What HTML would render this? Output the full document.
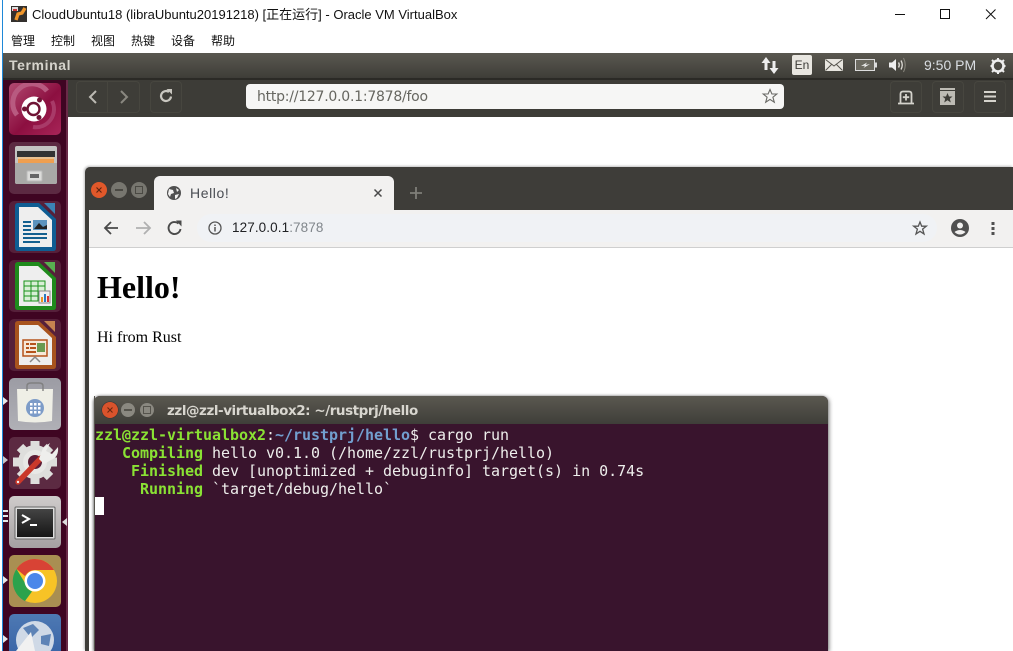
<!DOCTYPE html>
<html><head><meta charset="utf-8">
<style>
html,body{margin:0;padding:0;width:1013px;height:651px;overflow:hidden;background:#fff}
body{position:relative;font-family:"Liberation Sans","Noto Sans CJK SC",sans-serif}
.a{position:absolute}
.t{position:absolute;white-space:nowrap}
svg{position:absolute;overflow:visible}
.btn{position:absolute;box-sizing:border-box;height:32px;width:32px;top:81px;border:1px solid #47463f;border-radius:4px;background:#3e3d38}
.tile{position:absolute;left:9px;width:52px;height:52px;border-radius:5px;box-sizing:border-box;overflow:hidden}
.pip{position:absolute;width:0;height:0;border-top:4px solid transparent;border-bottom:4px solid transparent;border-left:5px solid #e8e8e8;left:3px}
.mono{font-family:"DejaVu Sans Mono",monospace;font-size:15px;line-height:18px;font-weight:400;color:#eeeeec;letter-spacing:-.03px;white-space:pre}
.g{color:#8ae234;font-weight:700}
.b{color:#729fcf;font-weight:700}
.wb{position:absolute;border-radius:50%;width:16px;height:16px}
.m{position:absolute;top:33px;font-size:12px;line-height:17px;color:#111;white-space:nowrap}
</style></head><body>

<!-- left desktop strip -->
<div class="a" style="left:0;top:0;width:2px;height:651px;background:#fff"></div>
<div class="a" style="left:2px;top:0;width:1px;height:651px;background:#1e88d8"></div>

<!-- VirtualBox title -->
<svg style="left:11px;top:6px" width="16" height="16" viewBox="0 0 16 16">
<rect width="16" height="16" fill="#33302d"/><path d="M5 14 L7 8 L11 7 L14 2" stroke="#f0962a" stroke-width="3.4" fill="none"/><rect x="1" y="1" width="6" height="4" fill="#ddd"/><rect x="2" y="3" width="4" height="2" fill="#c33"/></svg>
<div class="t" style="left:32px;top:6px;font-size:13px;line-height:17px;color:#111;font-family:'Liberation Sans','Noto Sans CJK SC',sans-serif;">CloudUbuntu18 (libraUbuntu20191218) [正在运行] - Oracle VM VirtualBox</div>
<div class="m" style="left:11px">管理</div>
<div class="m" style="left:51px">控制</div>
<div class="m" style="left:91px">视图</div>
<div class="m" style="left:131px">热键</div>
<div class="m" style="left:171px">设备</div>
<div class="m" style="left:211px">帮助</div>
<svg style="left:890px;top:8px" width="110" height="14" viewBox="0 0 110 14" fill="none" stroke="#111" stroke-width="1">
<path d="M5 6.500H15"/><rect x="50.500" y="1.500" width="9" height="9"/><path d="M96 1.500L105.500 11M105.500 1.500L96 11"/></svg>

<!-- Top panel -->
<div class="a" style="left:3px;top:53px;width:1010px;height:25px;background:linear-gradient(#5a5850,#3e3d38);"></div>
<div class="t" style="left:9px;top:57px;font-size:14px;line-height:16px;font-weight:700;color:#d6d4cc;font-family:'Liberation Sans',sans-serif;letter-spacing:.6px">Terminal</div>
<svg style="left:760px;top:56px" width="20" height="20" viewBox="0 0 20 20" fill="#eee"><path d="M6 1L1.500 7H4.500V14H7.500V7H10.500Z"/><path d="M13 18L8.500 12H11.500V5H14.500V12H17.500Z" transform="translate(1 0)"/></svg>
<div class="a" style="left:792px;top:55px;width:20px;height:20px;border-radius:2px;background:#e8e6e0;color:#3c3b37;font-size:12px;line-height:20px;text-align:center">En</div>
<svg style="left:825px;top:59px" width="18" height="12" viewBox="0 0 18 12"><rect width="18" height="12" fill="#e8e6e0"/><path d="M0.500 0.500L9 7L17.500 .5M.5 11.500L6.500 5.500M17.500 11.500L11.500 5.500" stroke="#55534c" fill="none"/></svg>
<svg style="left:855px;top:59px" width="22" height="12" viewBox="0 0 22 12"><rect x=".5" y=".5" width="19" height="11" fill="#6b6960" stroke="#ddd"/><rect x="20" y="3.500" width="2" height="5" fill="#ddd"/><path d="M6 7L12 3.500L10.500 6L15 5L8.500 9L10 6.700Z" fill="#eee"/></svg>
<svg style="left:888px;top:57px" width="20" height="16" viewBox="0 0 20 16" fill="none" stroke="#dedcd6"><path d="M1 5.500H4L8 2V14L4 10.500H1Z" fill="#eee" stroke="none"/><path d="M10.500 5.500Q12 8 10.500 10.500" stroke-width="1.400"/><path d="M13 3.500Q15.500 8 13 12.500" stroke-width="1.300"/><path d="M15.500 1Q19 8 15.500 15" stroke="#8a887f"/></svg>
<div class="t" style="left:924px;top:57px;font-size:14px;line-height:16px;color:#d9dde2;">9:50 PM</div>
<svg style="left:989px;top:56px" width="18" height="18" viewBox="0 0 18 18"><circle cx="9" cy="10" r="5.500" fill="none" stroke="#eee" stroke-width="2.600"/><g stroke="#eee" stroke-width="2"><path d="M9 2V5M3 4L4.500 5.500M15 4L13.500 5.500M1.500 10H3M15 10H16.500M3 16L4.500 14.500M15 16L13.500 14.500M9 15V18"/></g></svg>

<!-- Launcher -->
<div class="a" style="left:3px;top:78px;width:65px;height:573px;background:#3f0522"></div>
<div class="a" style="left:66px;top:78px;width:2px;height:573px;background:#6a2a48"></div>
<div class="a" style="left:3px;top:78px;width:65px;height:2px;background:#2b2a26"></div>

<div class="tile" style="top:83px;background:linear-gradient(135deg,#b34a72,#8c0f40 55%,#a82558)">
<svg style="left:0;top:0" width="52" height="52" viewBox="0 0 52 52"><path d="M8 32A18 18 0 0 1 38 8" fill="none" stroke="#b85a80" stroke-width="5"/><path d="M43 18A18 18 0 0 1 24 44" fill="none" stroke="#a83a68" stroke-width="4"/><circle cx="25" cy="26" r="12.500" fill="#fff"/><circle cx="24.500" cy="26" r="6" fill="none" stroke="#6f1435" stroke-width="2.400"/><circle cx="30.500" cy="17" r="2.500" fill="#6f1435"/><circle cx="15.500" cy="26" r="2.500" fill="#6f1435"/><circle cx="30" cy="34.500" r="2.500" fill="#6f1435"/></svg></div>

<div class="tile" style="top:142px;background:#5c2a42">
<svg style="left:0;top:0" width="52" height="52" viewBox="0 0 52 52"><rect x="6" y="4" width="42" height="38" rx="2" fill="#c4c4c2"/><rect x="8" y="9" width="38" height="6" fill="#333"/><rect x="9" y="15" width="36" height="2" fill="#e8c090"/><rect x="9" y="17" width="36" height="4" fill="#ef9f50"/><path d="M6 21H48V40Q48 42 46 42H8Q6 42 6 40Z" fill="#a9a9a7"/><rect x="18" y="29" width="15" height="10" rx="1" fill="#dcdcda" stroke="#bbb"/><rect x="21" y="32" width="9" height="4" fill="#666"/></svg></div>

<div class="tile" style="top:201px;background:#56203a">
<svg style="left:0;top:0" width="52" height="52" viewBox="0 0 52 52"><path d="M6 5Q6 2 9 2H30L47 18V47Q47 50 44 50H9Q6 50 6 47Z" fill="#0f5d93"/><path d="M35 2H46V13Z" fill="#3b83b5"/><path d="M10 6H29L43 19V46H10Z" fill="#eeeeee"/><g fill="#14608f"><rect x="14" y="20" width="8" height="2"/><rect x="14" y="24" width="8" height="2"/><rect x="14" y="28" width="8" height="2"/><rect x="14" y="32" width="24" height="2"/><rect x="14" y="36" width="24" height="2"/><rect x="14" y="40" width="17" height="2"/></g><rect x="24" y="19" width="14" height="10" fill="#5c93bd"/><path d="M25 28L30 22L34 26L38 24V28Z" fill="#222"/></svg></div>

<div class="tile" style="top:260px;background:#56203a">
<svg style="left:0;top:0" width="52" height="52" viewBox="0 0 52 52"><path d="M6 5Q6 2 9 2H30L47 18V47Q47 50 44 50H9Q6 50 6 47Z" fill="#1f8a1c"/><path d="M35 2H46V13Z" fill="#58b050"/><path d="M10 6H29L43 19V46H10Z" fill="#eeeeee"/><rect x="15" y="21" width="21" height="20" fill="#d9efd6" stroke="#19921a"/><path d="M15 26H36M15 31H36M15 36H36M22 21V41M29 21V41" stroke="#19921a"/><rect x="30" y="31" width="11" height="12" fill="#eee" stroke="#888"/><rect x="32" y="37" width="2" height="5" fill="#e99520"/><rect x="35" y="34" width="2" height="8" fill="#2a7ac0"/><rect x="38" y="36" width="2" height="6" fill="#d33"/></svg></div>

<div class="tile" style="top:319px;background:#56203a">
<svg style="left:0;top:0" width="52" height="52" viewBox="0 0 52 52"><path d="M6 5Q6 2 9 2H30L47 18V47Q47 50 44 50H9Q6 50 6 47Z" fill="#a8531e"/><path d="M35 2H46V13Z" fill="#c68350"/><path d="M10 6H29L43 19V46H10Z" fill="#eeeeee"/><rect x="14" y="21" width="24" height="16" fill="#f6e8d8" stroke="#b5531b" stroke-width="1.500"/><rect x="17" y="24" width="3" height="2" fill="#b5531b"/><rect x="21" y="24" width="6" height="2" fill="#b5531b"/><rect x="17" y="28" width="3" height="2" fill="#b5531b"/><rect x="21" y="28" width="6" height="2" fill="#b5531b"/><rect x="17" y="32" width="10" height="2" fill="#b5531b"/><rect x="28" y="24" width="8" height="9" fill="#6a9a50"/><path d="M21 43L26 38L31 43" stroke="#888" stroke-width="1.500" fill="none"/></svg></div>

<div class="tile" style="top:378px;background:linear-gradient(#9c9ca4,#b0b0b6)">
<svg style="left:0;top:0" width="52" height="52" viewBox="0 0 52 52"><path d="M8 11H44L43 43Q26 46 9 43Z" fill="#efefe6"/><path d="M18 13V8Q18 5 22 5H30Q34 5 34 8V13" fill="none" stroke="#808080" stroke-width="1.400"/><circle cx="26" cy="30" r="9" fill="#7d9cc8"/><g fill="#fff"><rect x="21" y="25" width="2.500" height="2.500"/><rect x="25" y="25" width="2.500" height="2.500"/><rect x="29" y="25" width="2.500" height="2.500"/><rect x="21" y="29" width="2.500" height="2.500"/><rect x="25" y="29" width="2.500" height="2.500"/><rect x="29" y="29" width="2.500" height="2.500"/><rect x="21" y="33" width="2.500" height="2.500"/><rect x="25" y="33" width="2.500" height="2.500"/><rect x="29" y="33" width="2.500" height="2.500"/></g></svg></div>

<div class="tile" style="top:437px;background:#5c2a42">
<svg style="left:0;top:0" width="52" height="52" viewBox="0 0 52 52"><g stroke="#dededc" stroke-width="9"><path d="M26 4V47M4 25H48M11 10L41 40M41 10L11 40"/></g><circle cx="26" cy="25" r="17" fill="#dededc"/><circle cx="26" cy="25" r="12" fill="#e8e8e6"/><circle cx="26" cy="25" r="7" fill="#5c1c36"/><path d="M9 45L32 21" stroke="#c9382a" stroke-width="5.500" stroke-linecap="round"/><circle cx="9" cy="45" r="1.200" fill="#eee"/><path d="M30 22L34 11L41 6L37 14L43 17L49 10Q50 20 42 23L35 27Z" fill="#eeeeec"/></svg></div>

<div class="tile" style="top:496px;background:linear-gradient(#cfcbcb,#a5a1a2)">
<svg style="left:0;top:0" width="52" height="52" viewBox="0 0 52 52"><defs><linearGradient id="tg" x1="0" y1="0" x2="0" y2="1"><stop offset="0" stop-color="#444"/><stop offset="1" stop-color="#151515"/></linearGradient></defs><rect x="6" y="11" width="40" height="32" rx="1" fill="#ddd" stroke="#666"/><rect x="8" y="13" width="36" height="28" fill="url(#tg)"/><path d="M13 19L20 23L13 27" fill="none" stroke="#fff" stroke-width="2"/><path d="M21 29H28" stroke="#fff" stroke-width="2"/></svg></div>

<div class="tile" style="top:555px;background:#a98f52">
<svg style="left:0;top:0" width="52" height="52" viewBox="0 0 52 52"><circle cx="26" cy="26" r="22" fill="#f7c326"/><path d="M26 4A22 22 0 0 1 45 15H26A11 11 0 0 0 16 21L7.500 14A22 22 0 0 1 26 4Z" fill="#d84335"/><path d="M7.500 14L16 28A11 11 0 0 0 23 36.500L16 46A22 22 0 0 1 7.500 14Z" fill="#2ba24c"/><circle cx="26" cy="26" r="10.500" fill="#fff"/><circle cx="26" cy="26" r="8" fill="#4b87ea"/></svg></div>

<div class="tile" style="top:614px;height:37px;border-radius:5px 5px 0 0;background:linear-gradient(#4e79b3,#3a66a8)">
<svg style="left:0;top:0" width="52" height="37" viewBox="0 0 52 37"><circle cx="26" cy="26" r="19" fill="#cfd9e6"/><path d="M14 14L24 10L30 16L22 24ZM32 22L42 20L40 32L32 30Z" fill="#5d83b6"/><path d="M7 37L22 18L26 37Z" fill="#f1f1f1"/></svg></div>

<div class="pip" style="top:397px"></div>
<div class="pip" style="top:456px;border-left-color:#c9c5c7"></div>
<div class="a" style="left:3px;top:510px;width:5px;height:2px;background:#e8e8e8"></div>
<div class="a" style="left:3px;top:515px;width:5px;height:2px;background:#e8e8e8"></div>
<div class="a" style="left:3px;top:520px;width:5px;height:2px;background:#e8e8e8"></div>
<div class="a" style="left:62px;top:518px;width:0;height:0;border-top:4px solid transparent;border-bottom:4px solid transparent;border-right:5px solid #ddd"></div>
<div class="pip" style="top:576px"></div>
<div class="pip" style="top:635px"></div>

<!-- Firefox toolbar -->
<div class="a" style="left:68px;top:78px;width:945px;height:39px;background:#3d3c37;border-top:0"></div>
<div class="a" style="left:68px;top:78px;width:945px;height:2px;background:#2b2a26"></div>
<div class="btn" style="left:76px;width:64px"></div>
<div class="a" style="left:107px;top:82px;width:1px;height:30px;background:#47463f"></div>
<div class="btn" style="left:150px"></div>
<svg style="left:86px;top:89px" width="50" height="16" viewBox="0 0 50 16" fill="none" stroke-width="2"><path d="M10 2L4 8L10 14" stroke="#bcbab3"/><path d="M35 2L41 8L35 14" stroke="#8a8880"/></svg>
<svg style="left:158px;top:88px" width="16" height="16" viewBox="0 0 16 16" fill="none"><path d="M13 8.500A5 5 0 1 1 11 4" stroke="#c9c7c0" stroke-width="2.200"/><path d="M8.500 1H14V6.500Z" fill="#c9c7c0"/></svg>
<div class="a" style="left:246px;top:84px;width:538px;height:25px;background:#f6f6f5;border-radius:4px"></div>
<div class="t" style="left:257px;top:89px;font-family:'DejaVu Sans',sans-serif;font-size:14px;line-height:17px;color:#666660;letter-spacing:-.24px">http://127.0.0.1:7878/foo</div>
<svg style="left:762px;top:88px" width="16" height="16" viewBox="0 0 16 16"><path d="M8 1.500L9.900 6H14.800L10.900 9.200L12.300 14.200L8 11.400L3.700 14.200L5.100 9.200L1.200 6H6.100Z" fill="none" stroke="#6a6a66" stroke-width="1.100"/></svg>
<div class="btn" style="left:890px"></div>
<div class="btn" style="left:932px"></div>
<div class="btn" style="left:974px"></div>
<svg style="left:898px;top:90px" width="16" height="15" viewBox="0 0 16 15" fill="none" stroke="#d5d3cc" stroke-width="1.800"><path d="M0 13.500H16M2.500 13.500V4Q2.500 1.500 5 1.500H11Q13.500 1.500 13.500 4V13.500"/><path d="M8 4V10.500M4.800 7.200H11.200"/></svg>
<svg style="left:940px;top:88px" width="16" height="17" viewBox="0 0 16 17"><rect y="0" width="15" height="2" fill="#bdbbb4"/><rect y="3" width="15" height="14" fill="#bdbbb4"/><path d="M7.500 5L9 8.500H12.500L9.800 10.700L10.800 14.500L7.500 12.300L4.200 14.500L5.200 10.700L2.500 8.500H6Z" fill="#3d3c37"/></svg>
<svg style="left:984px;top:91px" width="12" height="11" viewBox="0 0 12 11" fill="#d5d3cc"><rect width="12" height="2"/><rect y="4.500" width="12" height="2"/><rect y="9" width="12" height="2"/></svg>

<!-- Page -->
<div class="a" style="left:68px;top:117px;width:945px;height:534px;background:#fff"></div>

<!-- Chrome window -->
<div class="a" style="left:85px;top:167px;width:928px;height:484px;background:#3e3d39;border-radius:5px 0 0 0;box-shadow:-1px -1px 2px rgba(0,0,0,.25)"></div>
<div class="a" style="left:89px;top:210px;width:924px;height:441px;background:#fff"></div>
<div class="wb" style="left:91px;top:182px;background:#e0582a"></div>
<svg style="left:95px;top:186px" width="8" height="8" viewBox="0 0 8 8"><path d="M1.500 1.500L6.500 6.500M6.500 1.500L1.500 6.500" stroke="#5a2410" stroke-width="1.100"/></svg>
<div class="wb" style="left:111px;top:182px;background:#77766f"></div>
<div class="a" style="left:115px;top:189px;width:8px;height:2px;background:#4a4943"></div>
<div class="wb" style="left:131px;top:182px;background:#77766f"></div>
<div class="a" style="left:135px;top:186px;width:8px;height:8px;box-sizing:border-box;border:1px solid #4a4943"></div>

<div class="a" style="left:154px;top:176px;width:240px;height:34px;background:#f2f1f0;border-radius:6px 6px 0 0"></div>
<svg style="left:167px;top:186px" width="14" height="14" viewBox="0 0 14 14"><circle cx="7" cy="7" r="7" fill="#505050"/><path d="M2 3L6 4L7 7L4 8L3 11L1 8ZM9 2L12 4L10 6ZM8 9L12 8L10 12L8 13Z" fill="#f2f1f0"/></svg>
<div class="t" style="left:190px;top:184px;font-size:14px;line-height:18px;color:#4a4d53;font-family:'Liberation Sans',sans-serif;letter-spacing:.6px">Hello!</div>
<svg style="left:374px;top:189px" width="8" height="8" viewBox="0 0 8 8"><path d="M.5 .5L7.500 7.500M7.500 .5L.5 7.500" stroke="#4a4a4a" stroke-width="1.500"/></svg>
<svg style="left:410px;top:187px" width="12" height="12" viewBox="0 0 12 12"><path d="M6 0V12M0 6H12" stroke="#7f7e78" stroke-width="1.800"/></svg>

<div class="a" style="left:89px;top:210px;width:924px;height:37px;background:#f2f1f0;border-bottom:1px solid #cfcfcf"></div>
<div class="a" style="left:197px;top:214px;width:740px;height:28px;border-radius:14px;background:#f0f2f5"></div>
<svg style="left:103px;top:220px" width="56" height="16" viewBox="0 0 56 16" fill="none" stroke-width="1.800"><path d="M15 8H2M8 2L2 8L8 14" stroke="#4a4a4a"/><path d="M33 8H47M41 2L47 8L41 14" stroke="#b0b0b0"/></svg>
<svg style="left:167px;top:220px" width="16" height="16" viewBox="0 0 16 16" fill="none"><path d="M13.500 9A6 6 0 1 1 11.500 3.500" stroke="#4a4a4a" stroke-width="1.900"/><path d="M9 0.500H14.500V6.500Z" fill="#4a4a4a"/></svg>
<svg style="left:208px;top:221px" width="14" height="14" viewBox="0 0 14 14" fill="none" stroke="#555"><circle cx="7" cy="7" r="6" stroke-width="1.300"/><path d="M7 6V10.500M7 3.500V5" stroke-width="1.500"/></svg>
<div class="t" style="left:232px;top:220px;font-size:13.500px;line-height:16px;color:#202124;font-family:'Liberation Sans',sans-serif;letter-spacing:.1px">127.0.0.1<span style="color:#80868b">:7878</span></div>
<svg style="left:913px;top:221px" width="14" height="14" viewBox="0 0 14 14"><path d="M7 1L8.700 5.200H13.300L9.600 8.100L11 13L7 10.300L3 13L4.400 8.100L.7 5.200H5.300Z" fill="none" stroke="#555" stroke-width="1.300"/></svg>
<svg style="left:951px;top:219px" width="18" height="18" viewBox="0 0 18 18"><circle cx="9" cy="9" r="9" fill="#505050"/><circle cx="9" cy="6.500" r="3" fill="#f2f1f0"/><path d="M3.500 13Q9 9 14.500 13Q12 15.500 9 15.500Q6 15.500 3.500 13Z" fill="#f2f1f0"/></svg>
<svg style="left:991px;top:222px" width="4" height="13" viewBox="0 0 4 13" fill="#505050"><rect x=".5" width="3" height="3"/><rect x=".5" y="5" width="3" height="3"/><rect x=".5" y="10" width="3" height="3"/></svg>

<div class="t" style="left:97px;top:269px;font-family:'Liberation Serif',serif;font-size:32px;font-weight:700;line-height:37px;color:#000">Hello!</div>
<div class="t" style="left:97px;top:329px;font-family:'Liberation Serif',serif;font-size:16px;line-height:18px;color:#000">Hi from Rust</div>

<!-- Terminal -->
<div class="a" style="left:94px;top:396px;width:734px;height:255px;border-radius:6px 6px 0 0;background:#39142d;box-shadow:1px 1px 4px rgba(0,0,0,.55),-1px 0 2px rgba(0,0,0,.35);overflow:hidden">
<div class="a" style="left:0;top:0;width:734px;height:28px;background:linear-gradient(#5a5850,#3f3e39)"></div>
</div>
<div class="a" style="left:94px;top:396px;width:1px;height:255px;background:#55534c"></div>
<div class="wb" style="left:102px;top:402px;background:#d9532c;box-shadow:0 0 0 .5px #333"></div>
<svg style="left:106px;top:406px" width="8" height="8" viewBox="0 0 8 8"><path d="M1.500 1.500L6.500 6.500M6.500 1.500L1.500 6.500" stroke="#6a2810" stroke-width="1.100"/></svg>
<div class="wb" style="left:121px;top:403px;width:14px;height:14px;background:#8a8880"></div>
<div class="a" style="left:124px;top:409px;width:8px;height:2px;background:#55534c"></div>
<div class="wb" style="left:140px;top:403px;width:14px;height:14px;background:#8a8880"></div>
<div class="a" style="left:143px;top:406px;width:8px;height:8px;box-sizing:border-box;border:1px solid #55534c"></div>
<div class="t" style="left:167px;top:403px;font-family:'DejaVu Sans','Liberation Sans',sans-serif;font-size:13.500px;line-height:17px;font-weight:700;color:#d8d6cf;letter-spacing:-.45px">zzl@zzl-virtualbox2: ~/rustprj/hello</div>

<div class="t mono" style="left:95px;top:426px"><span class="g">zzl@zzl-virtualbox2</span>:<span class="b">~/rustprj/hello</span>$ cargo run</div>
<div class="t mono" style="left:95px;top:444px">   <span class="g">Compiling</span> hello v0.1.0 (/home/zzl/rustprj/hello)</div>
<div class="t mono" style="left:95px;top:462px">    <span class="g">Finished</span> dev [unoptimized + debuginfo] target(s) in 0.74s</div>
<div class="t mono" style="left:95px;top:480px">     <span class="g">Running</span> `target/debug/hello`</div>
<div class="a" style="left:95px;top:497px;width:9px;height:18px;background:#fff"></div>

</body></html>
